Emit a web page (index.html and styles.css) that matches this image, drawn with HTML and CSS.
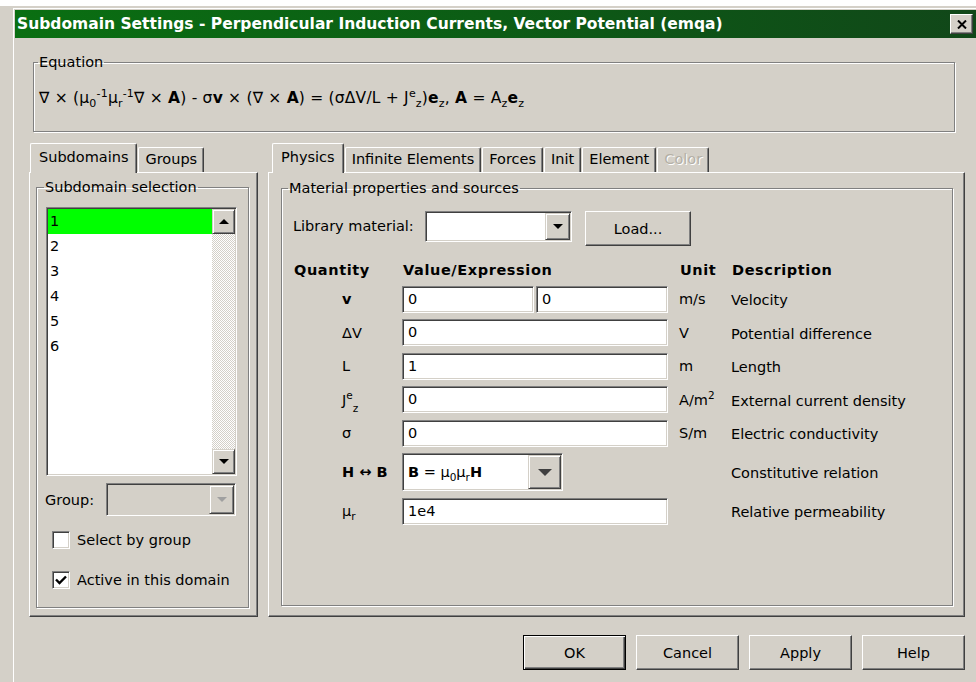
FILE: index.html
```html
<!DOCTYPE html>
<html lang="en">
<head>
<meta charset="utf-8">
<title>Subdomain Settings</title>
<link rel="stylesheet" href="styles.css">
</head>
<body>
<div class="desk">
  <div class="window">
    <div class="titlebar">
      <span class="title">Subdomain Settings - Perpendicular Induction Currents, Vector Potential (emqa)</span>
      <span class="close-btn">
        <svg width="10" height="9" viewBox="0 0 10 9"><path d="M1 0.5 L9 8.5 M9 0.5 L1 8.5" stroke="#000" stroke-width="2"/></svg>
      </span>
    </div>
    <div class="client">
      <fieldset class="group eq-group">
        <legend>Equation</legend>
        <div class="equation">∇ × (μ<sub>0</sub><sup>-1</sup>μ<sub>r</sub><sup>-1</sup>∇ × <b>A</b>) - σ<b>v</b> × (∇ × <b>A</b>) = (σΔV/L + J<sup>e</sup><sub>z</sub>)<b>e</b><sub>z</sub>, <b>A</b> = A<sub>z</sub><b>e</b><sub>z</sub></div>
      </fieldset>

      <div class="tabs-row">
        <div class="tabctl tabs-left">
          <div class="tab-strip">
            <span class="tab active">Subdomains</span>
            <span class="tab">Groups</span>
          </div>
          <div class="tab-panel">
            <fieldset class="group sel-group">
              <legend>Subdomain selection</legend>
              <div class="listbox">
                <ul class="list-items">
                  <li class="selected">1</li>
                  <li>2</li>
                  <li>3</li>
                  <li>4</li>
                  <li>5</li>
                  <li>6</li>
                </ul>
                <div class="vscroll">
                  <span class="sbtn"><i class="tri up"></i></span>
                  <span class="track"></span>
                  <span class="sbtn"><i class="tri down"></i></span>
                </div>
              </div>
              <div class="group-row">
                <span>Group:</span>
                <span class="combo combo-group is-disabled"><span class="combo-value"></span><span class="drop"><i class="tri down dim"></i></span></span>
              </div>
              <div class="check-row"><span class="checkbox"></span>Select by group</div>
              <div class="check-row"><span class="checkbox"><svg width="12" height="10" viewBox="0 0 12 10"><path d="M1 4.5 L4.5 8 L11 1.5" fill="none" stroke="#000" stroke-width="2.4"/></svg></span>Active in this domain</div>
            </fieldset>
          </div>
        </div>

        <div class="tabctl tabs-right">
          <div class="tab-strip">
            <span class="tab active">Physics</span>
            <span class="tab">Infinite Elements</span>
            <span class="tab">Forces</span>
            <span class="tab">Init</span>
            <span class="tab">Element</span>
            <span class="tab is-disabled">Color</span>
          </div>
          <div class="tab-panel">
            <fieldset class="group mat-group">
              <legend>Material properties and sources</legend>
              <div class="lib-row">
                <span class="lib-label">Library material:</span>
                <span class="combo combo-lib"><span class="combo-value"></span><span class="drop"><i class="tri down"></i></span></span>
                <span class="btn btn-load">Load...</span>
              </div>

              <div class="qtable">
                <div class="qh">Quantity</div>
                <div class="qh">Value/Expression</div>
                <div class="qh qunit">Unit</div>
                <div class="qh">Description</div>

                <div class="qsym"><b>v</b></div>
                <div class="qval split"><span class="field">0</span><span class="field">0</span></div>
                <div class="qunit">m/s</div>
                <div class="qdesc">Velocity</div>

                <div class="qsym">ΔV</div>
                <div class="qval"><span class="field">0</span></div>
                <div class="qunit">V</div>
                <div class="qdesc">Potential difference</div>

                <div class="qsym">L</div>
                <div class="qval"><span class="field">1</span></div>
                <div class="qunit">m</div>
                <div class="qdesc">Length</div>

                <div class="qsym">J<sup>e</sup><sub class="low">z</sub></div>
                <div class="qval"><span class="field">0</span></div>
                <div class="qunit">A/m<sup>2</sup></div>
                <div class="qdesc">External current density</div>

                <div class="qsym">σ</div>
                <div class="qval"><span class="field">0</span></div>
                <div class="qunit">S/m</div>
                <div class="qdesc">Electric conductivity</div>

                <div class="qsym"><b>H ↔ B</b></div>
                <div class="qval"><span class="combo combo-rel"><span class="combo-value"><b>B</b> = μ<sub>0</sub>μ<sub>r</sub><b>H</b></span><span class="drop"><i class="tri down big"></i></span></span></div>
                <div class="qunit"></div>
                <div class="qdesc">Constitutive relation</div>

                <div class="qsym">μ<sub>r</sub></div>
                <div class="qval"><span class="field">1e4</span></div>
                <div class="qunit"></div>
                <div class="qdesc">Relative permeability</div>
              </div>
            </fieldset>
          </div>
        </div>
      </div>

      <div class="buttons">
        <span class="btn is-default">OK</span>
        <span class="btn">Cancel</span>
        <span class="btn">Apply</span>
        <span class="btn">Help</span>
      </div>
    </div>
  </div>
</div>
</body>
</html>
```

FILE: styles.css
```css
* { box-sizing: border-box; }

html, body {
  margin: 0;
  padding: 0;
}

body {
  width: 976px;
  height: 682px;
  overflow: hidden;
  background: #d4d0c8;
  font-family: "DejaVu Sans", Tahoma, sans-serif;
  font-size: 14.5px;
  color: #000;
}

b { font-weight: bold; }

sup, sub {
  font-size: 10.5px;
  line-height: 0;
}
sup { vertical-align: 6px; }
sub { vertical-align: -4px; }
sub.low { vertical-align: -7px; }

/* desktop strip around the dialog */
.desk {
  border-top: 6px solid #fff;
  padding: 1px 0 0 12px;
  height: 100%;
}

/* classic raised window frame */
.window {
  width: 968px;
  height: 700px;
  border: 1px solid;
  border-color: #d4d0c8 #404040 #404040 #d4d0c8;
  box-shadow: inset 1px 1px 0 #fff, inset -1px -1px 0 #808080;
  padding: 2px;
  background: #d4d0c8;
}

.titlebar {
  height: 28px;
  display: flex;
  align-items: center;
  justify-content: space-between;
  padding-left: 2px;
  padding-right: 4px;
  background: linear-gradient(90deg, #0a6f12 0%, #0c5c15 50%, #114719 100%);
  color: #fff;
  font-weight: bold;
  font-size: 15.5px;
}
.title { white-space: nowrap; }

.close-btn {
  width: 23px;
  height: 20px;
  display: flex;
  align-items: center;
  justify-content: center;
  background: #d4d0c8;
  border: 1px solid;
  border-color: #fff #404040 #404040 #fff;
  box-shadow: inset -1px -1px 0 #808080;
}

.client {
  padding-top: 16px;
}

/* etched group boxes */
.group {
  margin: 0;
  min-width: 0;
  border: 1px solid #808080;
  box-shadow: inset 1px 1px 0 #fff, 1px 1px 0 #fff;
}
.group > legend {
  padding: 0 1px;
  line-height: 17px;
}

.eq-group {
  width: 922px;
  margin-left: 18px;
  padding: 17px 5px 23px;
}
.eq-group > legend { margin-left: -1px; }

.equation {
  font-size: 15.5px;
  line-height: 20px;
  letter-spacing: 0.2px;
  white-space: nowrap;
}
.equation sub, .equation sup { font-size: 11px; }

/* tab controls */
.tabs-row {
  display: flex;
  margin-top: 11px;
  padding-left: 14px;
}

.tabctl { display: flex; flex-direction: column; }
.tabs-left { width: 229px; }
.tabs-right { width: 697px; margin-left: 10px; }

.tab-strip {
  height: 29px;
  display: flex;
  align-items: flex-end;
  padding-left: 1px;
}
.tabs-right .tab-strip { padding-left: 4px; }

.tab {
  height: 25px;
  line-height: 22px;
  padding: 0 6px;
  margin-left: 1px;
  border-top: 1px solid #fff;
  border-left: 1px solid #fff;
  border-right: 1px solid #404040;
  border-radius: 2px 2px 0 0;
  box-shadow: inset -1px 0 0 #808080;
  white-space: nowrap;
}
.tab.active {
  height: 30px;
  margin-left: 0;
  margin-bottom: -1px;
  padding: 0 8px;
  line-height: 26px;
  background: #d4d0c8;
  position: relative;
  z-index: 1;
}
.tab.is-disabled {
  color: #b4b0a6;
  text-shadow: 1px 1px 0 #fff;
}

.tab-panel {
  height: 445px;
  border: 1px solid;
  border-color: #fff #404040 #404040 #fff;
  box-shadow: inset -1px -1px 0 #808080;
}

/* left page */
.sel-group {
  width: 213px;
  height: 429px;
  margin: 6px 0 0 6px;
  padding: 11px 11px 0 9px;
}
.sel-group > legend { margin-left: -2px; }

.listbox {
  width: 191px;
  height: 269px;
  display: flex;
  background: #fff;
  border: 1px solid;
  border-color: #808080 #fff #fff #808080;
  box-shadow: inset 1px 1px 0 #404040, inset -1px -1px 0 #d4d0c8;
  padding: 1px;
}

.list-items {
  list-style: none;
  margin: 0;
  padding: 0;
  flex: 1;
}
.list-items li {
  height: 25px;
  line-height: 25px;
  padding-left: 2px;
}
.list-items li.selected { background: #00ff00; }

.vscroll {
  width: 23px;
  display: flex;
  flex-direction: column;
}
.vscroll .track {
  flex: 1;
  background: repeating-conic-gradient(#fff 0 25%, #d4d0c8 0 50%) 0 0 / 2px 2px;
}

.sbtn, .drop {
  display: flex;
  align-items: center;
  justify-content: center;
  background: #d4d0c8;
  border: 1px solid;
  border-color: #d4d0c8 #404040 #404040 #d4d0c8;
  box-shadow: inset 1px 1px 0 #fff, inset -1px -1px 0 #808080;
}
.sbtn { height: 25px; }

.tri {
  width: 0;
  height: 0;
  border-left: 5px solid transparent;
  border-right: 5px solid transparent;
}
.tri.up { border-bottom: 5px solid #000; }
.tri.down { border-top: 5px solid #000; }
.tri.down.dim { border-top-color: #a0a0a0; }
.tri.down.big {
  border-left-width: 7px;
  border-right-width: 7px;
  border-top-width: 7px;
  border-top-color: #404040;
}

.group-row {
  display: flex;
  align-items: center;
  height: 33px;
  margin: 7px 0 0 -1px;
}
.group-row .combo { margin-left: auto; margin-right: 1px; }

.combo {
  display: flex;
  background: #fff;
  border: 1px solid;
  border-color: #808080 #fff #fff #808080;
  box-shadow: inset 1px 1px 0 #404040, inset -1px -1px 0 #d4d0c8;
  padding: 1px;
}
.combo .combo-value {
  flex: 1;
  display: block;
  padding-left: 4px;
  white-space: nowrap;
}
.combo.is-disabled { background: #d4d0c8; }
.combo-group { width: 130px; height: 33px; }
.combo-group .drop { width: 25px; }

.check-row {
  display: flex;
  align-items: center;
  height: 24px;
  padding-left: 6px;
  margin-top: 12px;
}
.check-row + .check-row { margin-top: 16px; }

.checkbox {
  width: 18px;
  height: 18px;
  margin-right: 7px;
  display: flex;
  align-items: center;
  justify-content: center;
  background: #fff;
  border: 1px solid;
  border-color: #808080 #fff #fff #808080;
  box-shadow: inset 1px 1px 0 #404040, inset -1px -1px 0 #d4d0c8;
}

/* right page */
.mat-group {
  width: 672px;
  height: 426px;
  margin: 7px 0 0 12px;
  padding: 14px 10px 0 11px;
}
.mat-group > legend { margin-left: -5px; }

.lib-row {
  display: flex;
  align-items: flex-start;
  height: 35px;
}
.lib-label {
  line-height: 31px;
  width: 132px;
  white-space: nowrap;
}
.combo-lib { width: 147px; height: 31px; }
.combo-lib .drop { width: 25px; }

.btn {
  display: flex;
  align-items: center;
  justify-content: center;
  width: 103px;
  height: 35px;
  background: #d4d0c8;
  border: 1px solid;
  border-color: #fff #404040 #404040 #fff;
  box-shadow: inset -1px -1px 0 #808080;
}
.btn-load {
  width: 106px;
  margin-left: 13px;
}
.btn.is-default {
  border-color: #000;
  box-shadow: inset 1px 1px 0 #fff, inset -1px -1px 0 #404040, inset -2px -2px 0 #808080;
}

.qtable {
  display: grid;
  grid-template-columns: 109px 266px 63px 1fr;
  grid-template-rows: 20px repeat(5, 27px) 38px 27px;
  row-gap: 6.5px;
  align-items: center;
  margin-top: 13px;
}
.qh {
  align-self: end;
  line-height: 17px;
  font-weight: bold;
  letter-spacing: 0.6px;
  padding-left: 1px;
  white-space: nowrap;
}
.qh.qunit { padding-left: 12px; }
.qsym { padding-left: 49px; white-space: nowrap; }
.qunit { padding-left: 11px; white-space: nowrap; }
.qdesc { white-space: nowrap; padding-top: 2px; }

.qval { display: flex; }
.qval.split { gap: 2px; }

.field {
  flex: 1;
  height: 27px;
  line-height: 25px;
  padding-left: 5px;
  background: #fff;
  border: 1px solid;
  border-color: #808080 #fff #fff #808080;
  box-shadow: inset 1px 1px 0 #404040, inset -1px -1px 0 #d4d0c8;
}

.combo-rel { width: 161px; height: 38px; }
.combo-rel .combo-value { line-height: 34px; }
.combo-rel .drop { width: 33px; }

/* dialog buttons */
.buttons {
  display: flex;
  justify-content: flex-end;
  gap: 10px;
  margin-top: 18px;
  padding-right: 12px;
}
```
